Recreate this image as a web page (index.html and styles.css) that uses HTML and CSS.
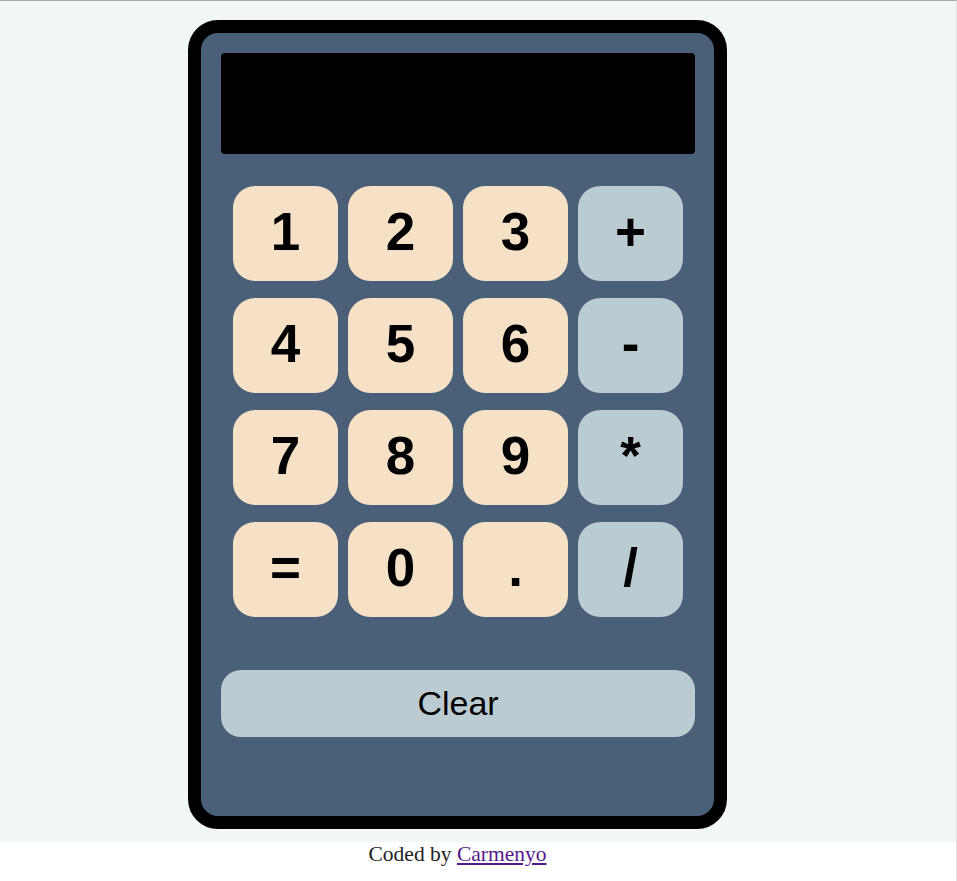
FILE: index.html
```html
<!DOCTYPE html>
<html>
<head>
<meta charset="utf-8">
<title>Calculator</title>
<link rel="stylesheet" href="styles.css">
</head>
<body>
<main class="stage">
  <div class="calc">
    <div class="display"></div>
    <div class="keys">
      <button class="key num">1</button>
      <button class="key num">2</button>
      <button class="key num">3</button>
      <button class="key op">+</button>
      <button class="key num">4</button>
      <button class="key num">5</button>
      <button class="key num">6</button>
      <button class="key op">-</button>
      <button class="key num">7</button>
      <button class="key num">8</button>
      <button class="key num">9</button>
      <button class="key op">*</button>
      <button class="key num">=</button>
      <button class="key num">0</button>
      <button class="key num">.</button>
      <button class="key op">/</button>
    </div>
    <button class="clear">Clear</button>
  </div>
</main>
<footer class="footer">Coded by <a href="#" class="credit">Carmenyo</a></footer>
</body>
</html>
```
FILE: styles.css
```css
html, body {
  margin: 0;
  padding: 0;
}
body {
  min-height: 880px;
  border-top: 1px solid #a9a9a9;
  border-right: 1px solid #e2e4e4;
  background: #ffffff;
  font-family: "Liberation Serif", serif;
}
.stage {
  display: flex;
  justify-content: center;
  background: #f1f7f7;
  padding: 19px 41px 13px 0;
}
.calc {
  box-sizing: border-box;
  width: 539px;
  height: 809px;
  border: 13px solid #000;
  border-radius: 30px;
  background: #4a5f78;
  padding: 20px 19px 20px 20px;
  display: flex;
  flex-direction: column;
}
.display {
  height: 101px;
  background: #000;
  border-radius: 4px;
}
.keys {
  margin-top: 32px;
  padding: 0 12px;
  display: grid;
  grid-template-columns: repeat(4, 105px);
  grid-auto-rows: 95px;
  column-gap: 10px;
  row-gap: 17px;
}
.key {
  border: none;
  border-radius: 22px;
  font-family: "Liberation Sans", Arial, sans-serif;
  font-weight: bold;
  font-size: 53px;
  color: #000;
  padding: 0 0 5px;
  display: flex;
  align-items: center;
  justify-content: center;
}
.num {
  background: #f7e1c6;
}
.op {
  background: #bbcbd2;
}
.clear {
  margin-top: 53px;
  height: 67px;
  border: none;
  border-radius: 20px;
  background: #bbcbd2;
  font-family: "Liberation Sans", Arial, sans-serif;
  font-size: 34px;
  color: #000;
  padding: 0;
}
.footer {
  text-align: center;
  font-size: 21.5px;
  color: #222;
  padding-right: 41px;
}
.credit {
  color: #551a8b;
}
```
